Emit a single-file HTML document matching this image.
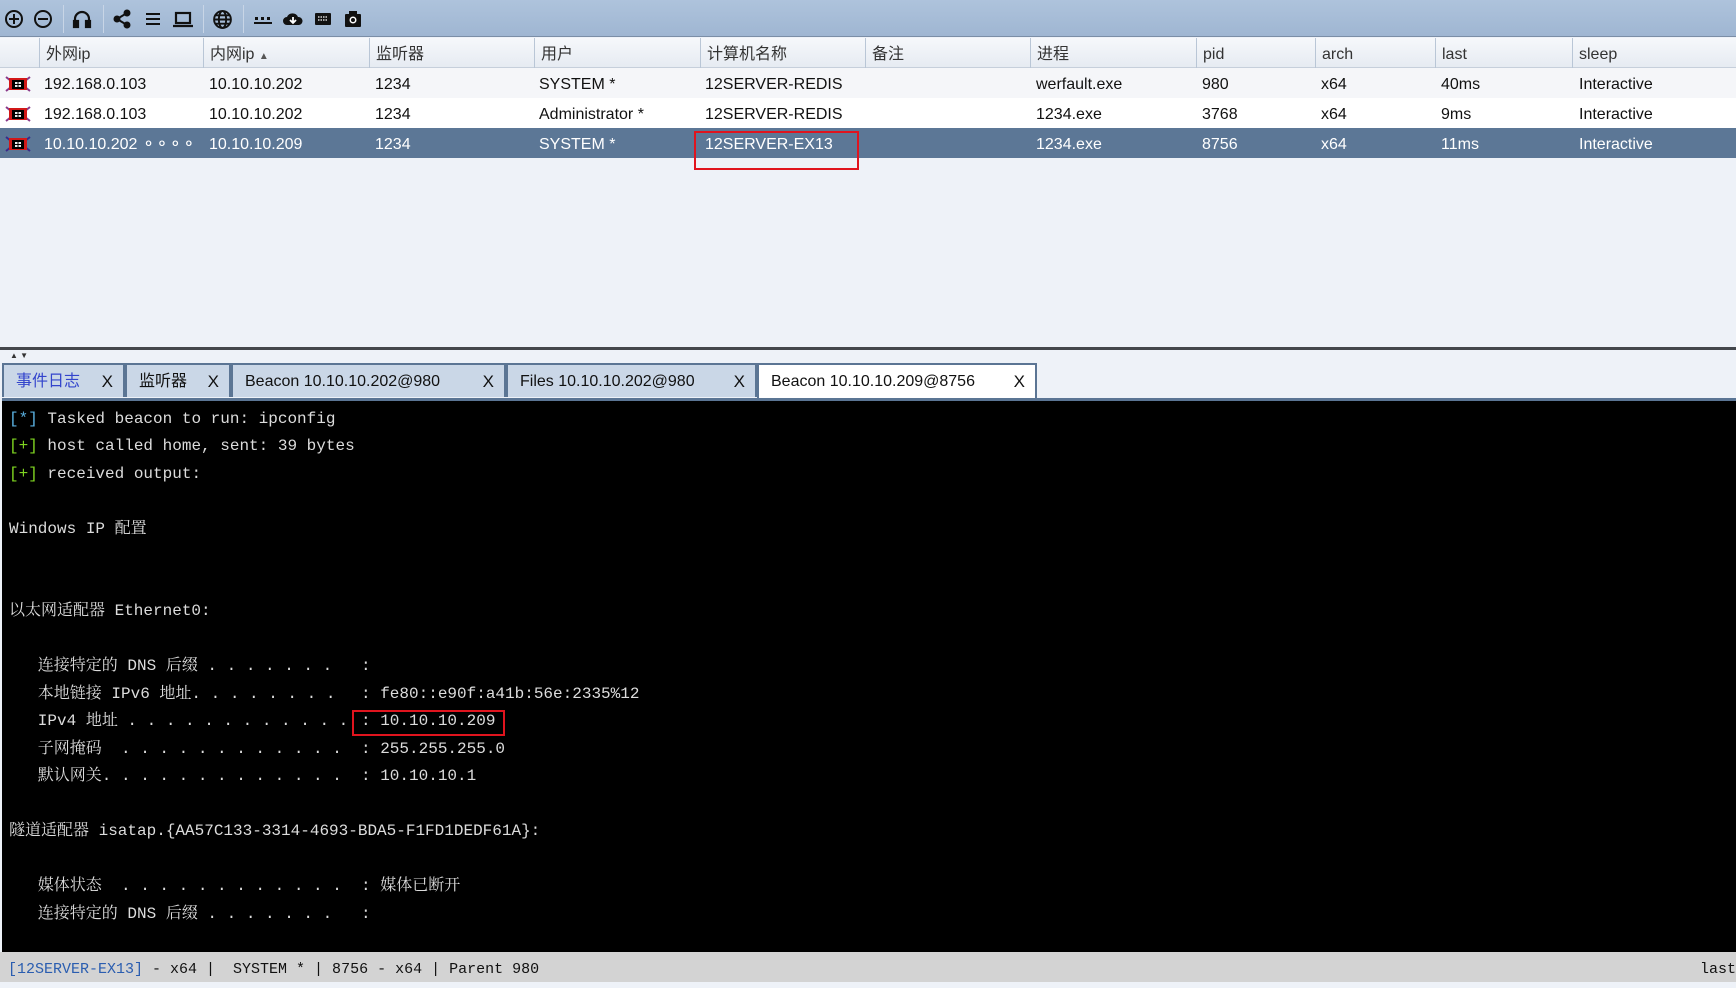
<!DOCTYPE html>
<html><head><meta charset="utf-8"><style>
*{margin:0;padding:0;box-sizing:border-box}
body{width:1736px;height:982px;overflow:hidden;background:#eef2f8;font-family:"Liberation Sans","Noto Sans CJK SC",sans-serif;position:relative}
.tb{position:absolute;left:0;top:0;width:1736px;height:37px;background:linear-gradient(#aec3dc,#9fb6d2);border-bottom:1px solid #7b8ea6}
.tb svg{position:absolute;top:9px}
.sep{position:absolute;top:5px;width:1px;height:28px;background:#c8d5e6}
.hdr{position:absolute;left:0;top:38px;width:1736px;height:30px;background:linear-gradient(#f6f8fb,#e6ebf2);border-bottom:1px solid #c6cfdb}
.hc{position:absolute;top:0;height:30px;line-height:34px;font-size:16px;color:#333;padding-left:6px;border-left:1px solid #b9c6d6}
.row{position:absolute;left:0;width:1736px;height:30px;font-size:16px;color:#111}
.row span{position:absolute;top:0;line-height:34px}
.sel{background:#5c7796;color:#fff}
.ic{position:absolute;left:5px;top:8px;width:26px;height:16px}
.split{position:absolute;left:0;top:347px;width:1736px;height:3px;background:#44474c}
.tab{position:absolute;top:363px;height:34px;line-height:34px;font-size:16px;background:#cad7e7;border:2px solid #5b7594;border-bottom:none;color:#111;padding-left:12px}
.tab b{position:absolute;right:10px;font-weight:normal;font-size:17px}
.con{position:absolute;left:2px;top:398px;width:1734px;height:554px;background:#000;border-top:3px solid #5b7594}
.l{position:absolute;left:9px;font-family:"Liberation Mono","Noto Serif CJK SC",monospace;font-size:16px;color:#dcdcdc;white-space:pre;line-height:20px}
.v{position:absolute;left:352px}
.st{position:absolute;left:0;top:952px;width:1736px;height:30px;background:#d3d3d3;font-family:"Liberation Mono","Noto Serif CJK SC",monospace;font-size:15px;line-height:36px;color:#111;white-space:pre;padding-left:8px}
.box{position:absolute;border:2px solid #e0141e}
</style></head><body>
<div class="tb">
<svg style="left:4px" width="20" height="20" viewBox="0 0 20 20" fill="none" stroke="#111" stroke-width="2"><circle cx="10" cy="10" r="8"/><path d="M5 10h10M10 5v10"/></svg>
<svg style="left:33px" width="20" height="20" viewBox="0 0 20 20" fill="none" stroke="#111" stroke-width="2"><circle cx="10" cy="10" r="8"/><path d="M5 10h10"/></svg>
<div class="sep" style="left:63px"></div>
<svg style="left:72px" width="20" height="20" viewBox="0 0 20 20" fill="none" stroke="#111" stroke-width="2.2"><path d="M3 14v-4a7 7 0 0 1 14 0v4"/><rect x="2" y="12" width="4" height="6" fill="#111"/><rect x="14" y="12" width="4" height="6" fill="#111"/></svg>
<div class="sep" style="left:103px"></div>
<svg style="left:112px" width="20" height="20" viewBox="0 0 20 20" fill="#111" stroke="#111" stroke-width="2"><path d="M15 4L5 10l10 6" fill="none"/><circle cx="15" cy="4" r="2.5"/><circle cx="5" cy="10" r="2.5"/><circle cx="15" cy="16" r="2.5"/></svg>
<svg style="left:143px" width="20" height="20" viewBox="0 0 20 20" stroke="#111" stroke-width="2"><path d="M3 5h14M3 10h14M3 15h14"/></svg>
<svg style="left:172px" width="22" height="20" viewBox="0 0 22 20" fill="none" stroke="#111" stroke-width="2.2"><rect x="4" y="4" width="14" height="10"/><path d="M1 17h20"/></svg>
<div class="sep" style="left:203px"></div>
<svg style="left:212px" width="21" height="21" viewBox="0 0 20 20" fill="none" stroke="#111" stroke-width="1.8"><circle cx="10" cy="10" r="8"/><ellipse cx="10" cy="10" rx="3.5" ry="8"/><path d="M2 10h16M3.5 6h13M3.5 14h13"/></svg>
<div class="sep" style="left:243px"></div>
<svg style="left:252px" width="22" height="20" viewBox="0 0 22 20" fill="#111"><rect x="3" y="8" width="3" height="3"/><rect x="9" y="8" width="3" height="3"/><rect x="15" y="8" width="3" height="3"/><rect x="2" y="13" width="18" height="2"/></svg>
<svg style="left:282px" width="22" height="20" viewBox="0 0 22 20"><path d="M5 16a4 4 0 0 1 0-8 6 6 0 0 1 11 0 4 4 0 0 1 1 8z" fill="#111"/><path d="M11 8v6M8 11l3 3 3-3" stroke="#fff" stroke-width="1.8" fill="none"/></svg>
<svg style="left:313px" width="20" height="20" viewBox="0 0 20 20"><rect x="2" y="4" width="16" height="12" rx="1" fill="#111"/><path d="M5 8h10M5 11h10" stroke="#fff" stroke-width="1.2" stroke-dasharray="1.5 1"/></svg>
<svg style="left:343px" width="20" height="20" viewBox="0 0 20 20"><rect x="2" y="5" width="16" height="13" rx="1" fill="#111"/><rect x="6" y="2" width="8" height="4" fill="#111"/><circle cx="10" cy="11" r="3.5" fill="#fff"/><circle cx="10" cy="11" r="2" fill="#111"/></svg>
</div>
<div class="hdr">
<div class="hc" style="left:39px">外网ip</div>
<div class="hc" style="left:203px">内网ip <span style="font-size:10px;color:#555">▲</span></div>
<div class="hc" style="left:369px">监听器</div>
<div class="hc" style="left:534px">用户</div>
<div class="hc" style="left:700px">计算机名称</div>
<div class="hc" style="left:865px">备注</div>
<div class="hc" style="left:1030px">进程</div>
<div class="hc" style="left:1196px">pid</div>
<div class="hc" style="left:1315px">arch</div>
<div class="hc" style="left:1435px">last</div>
<div class="hc" style="left:1572px">sleep</div>
</div>
<div class="row" style="top:68px;background:#f5f6f9">
<svg class="ic" viewBox="0 0 26 16"><path d="M1 1l5 4M25 1l-5 4M1 15l5-4M25 15l-5-4" stroke="#8a3a8a" stroke-width="2"/><rect x="4" y="2" width="18" height="12" fill="#d21818"/><rect x="7" y="4" width="12" height="9" fill="#000"/><rect x="10" y="6" width="6" height="5" fill="#eee"/><path d="M13 6v5M10 8.5h6" stroke="#000"/></svg>
<span style="left:44px">192.168.0.103</span><span style="left:209px">10.10.10.202</span><span style="left:375px">1234</span><span style="left:539px">SYSTEM *</span><span style="left:705px">12SERVER-REDIS</span><span style="left:1036px">werfault.exe</span><span style="left:1202px">980</span><span style="left:1321px">x64</span><span style="left:1441px">40ms</span><span style="left:1579px">Interactive</span></div>
<div class="row" style="top:98px;background:#fff">
<svg class="ic" viewBox="0 0 26 16"><path d="M1 1l5 4M25 1l-5 4M1 15l5-4M25 15l-5-4" stroke="#8a3a8a" stroke-width="2"/><rect x="4" y="2" width="18" height="12" fill="#d21818"/><rect x="7" y="4" width="12" height="9" fill="#000"/><rect x="10" y="6" width="6" height="5" fill="#eee"/><path d="M13 6v5M10 8.5h6" stroke="#000"/></svg>
<span style="left:44px">192.168.0.103</span><span style="left:209px">10.10.10.202</span><span style="left:375px">1234</span><span style="left:539px">Administrator *</span><span style="left:705px">12SERVER-REDIS</span><span style="left:1036px">1234.exe</span><span style="left:1202px">3768</span><span style="left:1321px">x64</span><span style="left:1441px">9ms</span><span style="left:1579px">Interactive</span></div>
<div class="row sel" style="top:128px">
<svg class="ic" viewBox="0 0 26 16"><path d="M1 1l5 4M25 1l-5 4M1 15l5-4M25 15l-5-4" stroke="#3a2a8a" stroke-width="2"/><rect x="4" y="2" width="18" height="12" fill="#d21818"/><rect x="7" y="4" width="12" height="9" fill="#000"/><rect x="10" y="6" width="6" height="5" fill="#eee"/><path d="M13 6v5M10 8.5h6" stroke="#000"/></svg>
<span style="left:44px">10.10.10.202 ⚬⚬⚬⚬</span><span style="left:209px">10.10.10.209</span><span style="left:375px">1234</span><span style="left:539px">SYSTEM *</span><span style="left:705px">12SERVER-EX13</span><span style="left:1036px">1234.exe</span><span style="left:1202px">8756</span><span style="left:1321px">x64</span><span style="left:1441px">11ms</span><span style="left:1579px">Interactive</span></div>
<div class="box" style="left:694px;top:131px;width:165px;height:39px"></div>
<div class="split"></div>
<div style="position:absolute;left:10px;top:351px;font-size:8px;color:#333">▲ ▼</div>
<div class="tab" style="left:2px;width:123px;color:#3344cc">事件日志<b style="color:#111">X</b></div>
<div class="tab" style="left:125px;width:106px">监听器<b>X</b></div>
<div class="tab" style="left:231px;width:275px">Beacon 10.10.10.202@980<b>X</b></div>
<div class="tab" style="left:506px;width:251px">Files 10.10.10.202@980<b>X</b></div>
<div class="tab" style="left:757px;width:280px;background:#fff;height:36px">Beacon 10.10.10.209@8756<b>X</b></div>
<div class="con"></div>
<div class="l" style="top:409px"><span style="color:#5ab0e0">[*]</span> Tasked beacon to run: ipconfig</div>
<div class="l" style="top:436px"><span style="color:#7ed321">[+]</span> host called home, sent: 39 bytes</div>
<div class="l" style="top:464px"><span style="color:#7ed321">[+]</span> received output:</div>
<div class="l" style="top:519px">Windows IP 配置</div>
<div class="l" style="top:601px">以太网适配器 Ethernet0:</div>
<div class="l" style="top:656px">   连接特定的 DNS 后缀 . . . . . . .<span class="v">:</span></div>
<div class="l" style="top:684px">   本地链接 IPv6 地址. . . . . . . .<span class="v">: fe80::e90f:a41b:56e:2335%12</span></div>
<div class="l" style="top:711px">   IPv4 地址 . . . . . . . . . . . .<span class="v">: 10.10.10.209</span></div>
<div class="l" style="top:739px">   子网掩码  . . . . . . . . . . . .<span class="v">: 255.255.255.0</span></div>
<div class="l" style="top:766px">   默认网关. . . . . . . . . . . . .<span class="v">: 10.10.10.1</span></div>
<div class="l" style="top:821px">隧道适配器 isatap.{AA57C133-3314-4693-BDA5-F1FD1DEDF61A}:</div>
<div class="l" style="top:876px">   媒体状态  . . . . . . . . . . . .<span class="v">: 媒体已断开</span></div>
<div class="l" style="top:904px">   连接特定的 DNS 后缀 . . . . . . .<span class="v">:</span></div>
<div class="box" style="left:352px;top:710px;width:153px;height:26px"></div>
<div class="st"><span style="color:#2a5db0">[12SERVER-EX13]</span> - x64 |  SYSTEM * | 8756 - x64 | Parent 980<span style="position:absolute;right:0">last</span></div>
</body></html>
